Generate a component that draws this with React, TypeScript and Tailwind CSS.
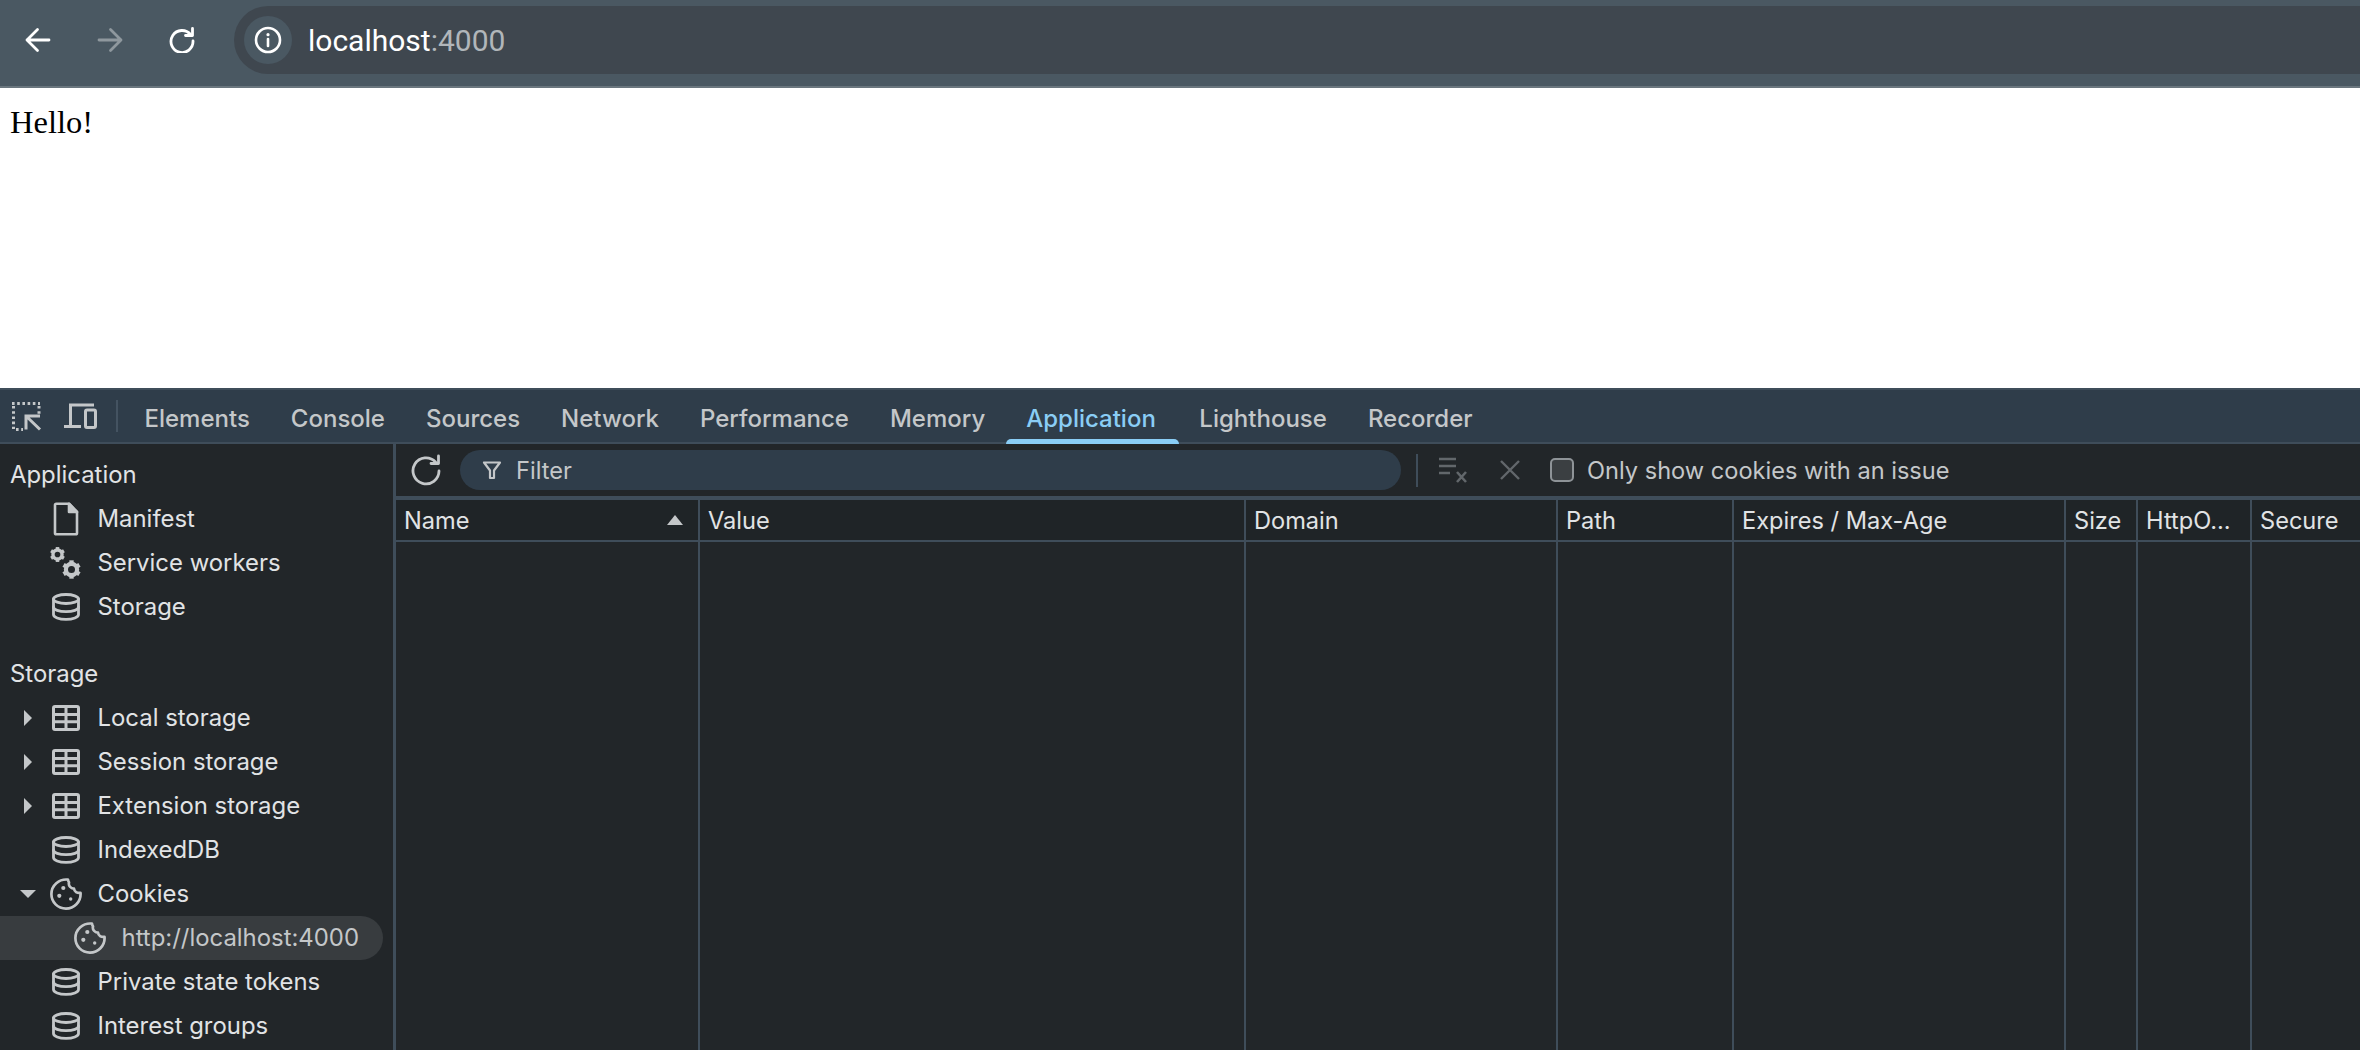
import React from "react";

const stroke = { fill: "none", stroke: "currentColor", strokeLinecap: "round", strokeLinejoin: "round" } as const;

function Db() {
  return (
    <svg width="28" height="28" viewBox="0 0 28 28" {...stroke} strokeWidth={2.8}>
      <ellipse cx="14" cy="6" rx="12.5" ry="4.5" />
      <path d="M1.5 6V21.5C1.5 24.2 7 26.4 14 26.4S26.5 24.2 26.5 21.5V6" />
      <path d="M1.5 14C1.5 16.7 7 18.7 14 18.7S26.5 16.7 26.5 14" />
    </svg>
  );
}
function Tbl() {
  return (
    <svg width="28" height="26" viewBox="0 0 28 26" fill="none" stroke="currentColor" strokeWidth={3}>
      <rect x="1.5" y="1.5" width="25" height="23" rx="1.5" />
      <path d="M1 9.4H27M1 16.8H27M14 1V25" />
    </svg>
  );
}
function Cookie() {
  return (
    <svg width="32" height="32" viewBox="0 0 32 32" {...stroke} strokeWidth={2.7}>
      <path d="M18 1.6C9 0.6 1.4 7.5 1.4 16C1.4 24.2 7.8 30.6 16 30.6C24.2 30.6 30.6 24 30.6 16C30.6 15.6 30.6 15.2 30.5 14.8C27.2 15.4 24.3 13.6 24 10.6C20.8 10.8 18.2 7.5 19 4.4C18.4 3.6 18 2.6 18 1.6Z" />
      <circle cx="13.3" cy="10" r="2.1" fill="currentColor" stroke="none" />
      <circle cx="9.3" cy="17.8" r="2.1" fill="currentColor" stroke="none" />
      <circle cx="20.7" cy="21" r="1.7" fill="currentColor" stroke="none" />
    </svg>
  );
}
function Gear({ size }: { size: number }) {
  return (
    <svg width={size} height={size} viewBox="0 0 24 24" fill="none" stroke="currentColor">
      <circle cx="12" cy="12" r="6.4" strokeWidth={4.8} />
      {[0, 60, 120, 180, 240, 300].map((a) => (
        <path key={a} d="M12 1.5V6" strokeWidth={5} transform={`rotate(${a} 12 12)`} />
      ))}
    </svg>
  );
}

function Row({
  label,
  icon,
  arrow,
  selected,
}: {
  label: string;
  icon: React.ReactNode;
  arrow?: "right" | "down";
  selected?: boolean;
}) {
  return (
    <div
      className={`h-[44px] flex items-center shrink-0 text-[23.9px] mr-[10px] rounded-r-full ${
        selected ? "bg-[#383c3f] text-[#c4c7c9]" : "text-[#e1e3e5]"
      }`}
    >
      <div className={`shrink-0 flex items-center justify-center ${selected ? "w-[74px]" : "w-[20px] ml-[18px] mr-[12px]"}`}>
        {arrow === "right" && <div className="w-0 h-0 border-y-[8px] border-y-transparent border-l-[8px] border-l-[#c4c7c9]" />}
        {arrow === "down" && <div className="w-0 h-0 border-x-[8px] border-x-transparent border-t-[8px] border-t-[#c4c7c9]" />}
      </div>
      <div className="text-[#c4c7c9] flex items-center justify-center w-[32px] shrink-0">{icon}</div>
      <span className="ml-[15.5px]">{label}</span>
    </div>
  );
}

const tabs = ["Elements", "Console", "Sources", "Network", "Performance", "Memory", "Application", "Lighthouse", "Recorder"];
const cols = [
  { w: "w-[304px]", name: "Name", sort: true },
  { w: "w-[546px]", name: "Value" },
  { w: "w-[312px]", name: "Domain" },
  { w: "w-[176px]", name: "Path" },
  { w: "w-[332px]", name: "Expires / Max-Age" },
  { w: "w-[72px]", name: "Size" },
  { w: "w-[114px]", name: "HttpO..." },
  { w: "flex-1", name: "Secure" },
];

export default function App() {
  return (
    <div className="h-[1050px] w-[2360px] overflow-hidden flex flex-col bg-white font-['Inter','Liberation_Sans',sans-serif]">
      {/* browser toolbar */}
      <div className="h-[88px] shrink-0 bg-[#4a5862] border-b-2 border-[#6a767e] flex items-start pt-[6px]">
        <div className="w-[234px] h-[68px] shrink-0 flex items-center text-white pl-[25px]">
          <svg width="26" height="26" viewBox="0 0 26 26" {...stroke} strokeWidth={2.8}>
            <path d="M24 13H2M12.5 2.5L2 13L12.5 23.5" />
          </svg>
          <svg className="ml-[46px] text-[#8f989e]" width="26" height="26" viewBox="0 0 26 26" {...stroke} strokeWidth={2.8}>
            <path d="M2 13H24M13.5 2.5L24 13L13.5 23.5" />
          </svg>
          <svg className="ml-[46px]" width="26" height="26" viewBox="0 0 26 26" {...stroke} strokeWidth={2.8}>
            <path d="M21.5 7.5A11 11 0 1 0 24 14" />
            <path d="M23.5 1.5V8.5H16.5" />
          </svg>
        </div>
        <div className="flex-1 h-[68px] bg-[#3f474f] rounded-l-full flex items-center pl-[10px]">
          <div className="w-[48px] h-[48px] rounded-full bg-[#4a5862] flex items-center justify-center text-white">
            <svg width="28" height="28" viewBox="0 0 28 28" fill="none" stroke="currentColor" strokeWidth={2.6} strokeLinecap="round">
              <circle cx="14" cy="14" r="12" />
              <path d="M14 13V20" />
              <circle cx="14" cy="8.7" r="1.6" fill="currentColor" stroke="none" />
            </svg>
          </div>
          <div className="ml-[16px] text-[30px] font-['Roboto','Liberation_Sans',sans-serif] text-white">
            localhost<span className="text-[#b1b6ba]">:4000</span>
          </div>
        </div>
      </div>

      {/* page */}
      <div className="h-[300px] shrink-0 bg-white pl-[10px] pt-[14px] text-[32.5px] leading-[40px] text-black font-['Liberation_Serif',serif]">Hello!</div>

      {/* devtools */}
      <div className="flex-1 min-h-0 flex flex-col bg-[#222629]">
        <div className="h-[56px] shrink-0 bg-[#2f3d4a] border-t-2 border-b-2 border-[#3f4d5a] flex items-center text-[#c4c7c9]">
          <div className="flex items-center w-[124px] shrink-0">
            <svg className="ml-[10px]" width="32" height="30" viewBox="0 0 32 30" fill="none" stroke="currentColor" strokeWidth={3}>
              <path d="M2 2.5H30" strokeDasharray="2.6 2.6" />
              <path d="M3.5 5V28" strokeDasharray="2.6 2.6" />
              <path d="M29 5V13" strokeDasharray="2.6 2.6" />
              <path d="M6 28.5H13" strokeDasharray="2.6 2.6" />
              <path d="M16 28.5V15H30M16 15L30 28.5" />
            </svg>
            <svg className="ml-[22px]" width="34" height="26" viewBox="0 0 34 26" fill="none" stroke="currentColor" strokeWidth={3}>
              <path d="M6.5 22V2H30" />
              <path d="M0 23.5H17" />
              <rect x="21.5" y="7" width="10" height="17.5" rx="1.5" />
            </svg>
            <div className="ml-[18px] w-[2px] h-[32px] bg-[#445361]" />
          </div>
          {tabs.map((t) => (
            <div
              key={t}
              className={`relative h-full flex items-center pt-[5px] pl-[20.5px] text-[24px] font-medium ${
                t === "Application" ? "text-[#8acdf5] pr-[23px]" : "pr-[20.5px]"
              }`}
            >
              {t}
              {t === "Application" && <div className="absolute left-0 right-0 -bottom-[2px] h-[5px] rounded-t-[5px] bg-[#8acdf5]" />}
            </div>
          ))}
        </div>

        <div className="flex-1 min-h-0 flex">
          {/* sidebar */}
          <div className="w-[393px] shrink-0 flex flex-col pt-[8.5px]">
            <div className="h-[44px] shrink-0 flex items-center pl-[10px] text-[23.9px] text-[#e1e3e5]">Application</div>
            <Row
              label="Manifest"
              icon={
                <svg width="26" height="34" viewBox="0 0 26 34" fill="none" stroke="currentColor" strokeWidth={2.6} strokeLinejoin="round">
                  <path d="M2 3Q2 1.7 3.3 1.7H16L24 10V31Q24 32.3 22.7 32.3H3.3Q2 32.3 2 31Z" />
                  <path d="M16 1.7L24 10H16Z" fill="currentColor" />
                </svg>
              }
            />
            <Row
              label="Service workers"
              icon={
                <div className="relative w-[33px] h-[34px]">
                  <div className="absolute -left-[1px] top-0"><Gear size={17} /></div>
                  <div className="absolute right-0 bottom-0"><Gear size={21} /></div>
                </div>
              }
            />
            <Row label="Storage" icon={<Db />} />
            <div className="h-[23.5px] shrink-0" />
            <div className="h-[44px] shrink-0 flex items-center pl-[10px] text-[23.9px] text-[#e1e3e5]">Storage</div>
            <Row label="Local storage" arrow="right" icon={<Tbl />} />
            <Row label="Session storage" arrow="right" icon={<Tbl />} />
            <Row label="Extension storage" arrow="right" icon={<Tbl />} />
            <Row label="IndexedDB" icon={<Db />} />
            <Row label="Cookies" arrow="down" icon={<Cookie />} />
            <Row label="http://localhost:4000" selected icon={<Cookie />} />
            <Row label="Private state tokens" icon={<Db />} />
            <Row label="Interest groups" icon={<Db />} />
          </div>
          <div className="w-[3px] shrink-0 bg-[#3f4d5a]" />

          {/* main */}
          <div className="flex-1 min-w-0 flex flex-col">
            <div className="h-[52px] shrink-0 flex items-center text-[#c4c7c9]">
              <svg className="ml-[14px]" width="32" height="32" viewBox="0 0 32 32" {...stroke} strokeWidth={2.8}>
                <path d="M25.5 8A13 13 0 1 0 29 17" />
                <path d="M28.5 2V9.5H21" />
              </svg>
              <div className="ml-[18px] w-[941px] h-[40px] rounded-full bg-[#2f3d4a] flex items-center pl-[22px] text-[23.6px] text-[#c4c7c9]">
                <svg width="20" height="20" viewBox="0 0 20 20" {...stroke} strokeWidth={2.2}>
                  <path d="M2 2.5H18L12 10.5V18H8V10.5Z" />
                </svg>
                <span className="ml-[14px] pt-[1.5px]">Filter</span>
              </div>
              <div className="ml-[15px] w-[2px] h-[33px] bg-[#3f4d5a]" />
              <svg className="ml-[20px] text-[#62676b]" width="30" height="26" viewBox="0 0 30 26" fill="none" stroke="currentColor" strokeWidth={2.6}>
                <path d="M1 2H18M1 9H18M1 16H12M19 15L28 25M28 15L19 25" />
              </svg>
              <svg className="ml-[31px] text-[#62676b]" width="22" height="22" viewBox="0 0 22 22" fill="none" stroke="currentColor" strokeWidth={2.4}>
                <path d="M2 2L20 20M20 2L2 20" />
              </svg>
              <div className="ml-[29px] w-[24px] h-[24px] rounded-[5px] border-2 border-[#8e9397] bg-[#3b3f42]" />
              <span className="ml-[13px] pt-[1.5px] text-[23.6px] text-[#c4c7c9]">Only show cookies with an issue</span>
            </div>
            <div className="h-[4px] shrink-0 bg-[#3f4d5a]" />
            <div className="flex-1 min-h-0 flex">
              {cols.map((c, i) => (
                <div key={c.name} className={`${c.w} ${i < cols.length - 1 ? "border-r-2 border-[#3f4d5a] shrink-0" : ""} flex flex-col`}>
                  <div className="h-[42px] shrink-0 bg-[#1f2427] border-b-2 border-[#3f4d5a] flex items-center justify-between pl-[8px] pr-[15px] text-[23.6px] text-[#e1e3e5] whitespace-nowrap">
                    <span className="pt-[1.5px]">{c.name}</span>
                    {c.sort && <div className="w-0 h-0 border-x-[8px] border-x-transparent border-b-[10px] border-b-[#c4c7c9]" />}
                  </div>
                </div>
              ))}
            </div>
          </div>
        </div>
      </div>
    </div>
  );
}
